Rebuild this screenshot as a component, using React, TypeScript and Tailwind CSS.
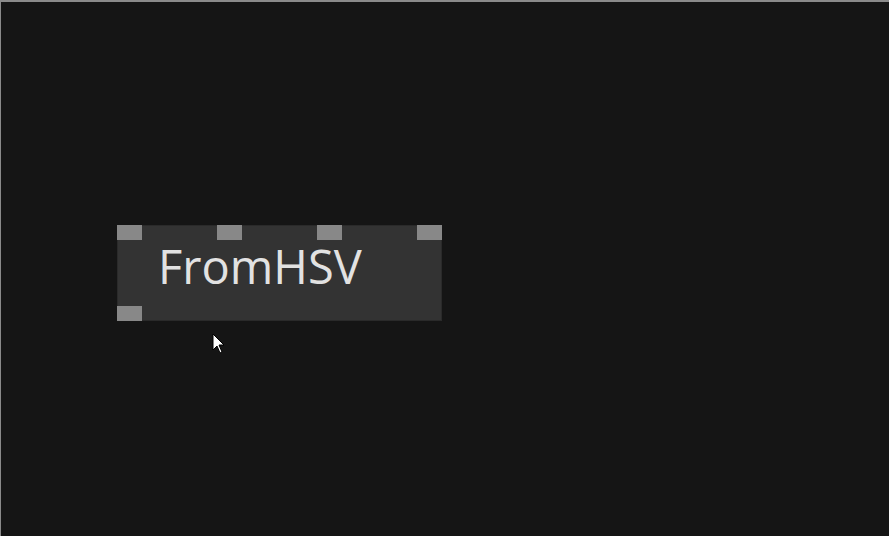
import React from 'react';

// Single node sitting on a dark patch canvas
const Port = () => <div className="w-[25px] h-[15px] bg-[#888888]" />;

const Node = ({ label }: { label: string }) => (
  <div className="absolute left-[116px] top-[223px] w-[325px] h-[96px] bg-[#333333] border border-[#2a2a2a] flex flex-col justify-between">
    <div className="flex justify-between -m-px">
      <Port />
      <Port />
      <Port />
      <Port />
    </div>
    <div
      className="absolute left-[40px] top-[17px] text-[47px] leading-none font-medium text-[#e2e2e2]"
      style={{ fontFamily: '"Open Sans", "DejaVu Sans", sans-serif' }}
    >
      {label}
    </div>
    <div className="flex -m-px">
      <Port />
    </div>
  </div>
);

export default function App() {
  return (
    <div className="relative w-[889px] h-[536px] bg-[#151515] overflow-hidden border-t-2 border-l border-[#8a8a8a]">
      <Node label="FromHSV" />
      {/* mouse cursor */}
      <svg className="absolute left-[211px] top-[331px]" width="14" height="22" viewBox="0 0 14 22">
        <path d="M1 1 L1 17 L5 13 L8 20 L10 19 L7 12 L12 12 Z" fill="#ffffff" stroke="#000000" strokeWidth="1" />
      </svg>
    </div>
  );
}
